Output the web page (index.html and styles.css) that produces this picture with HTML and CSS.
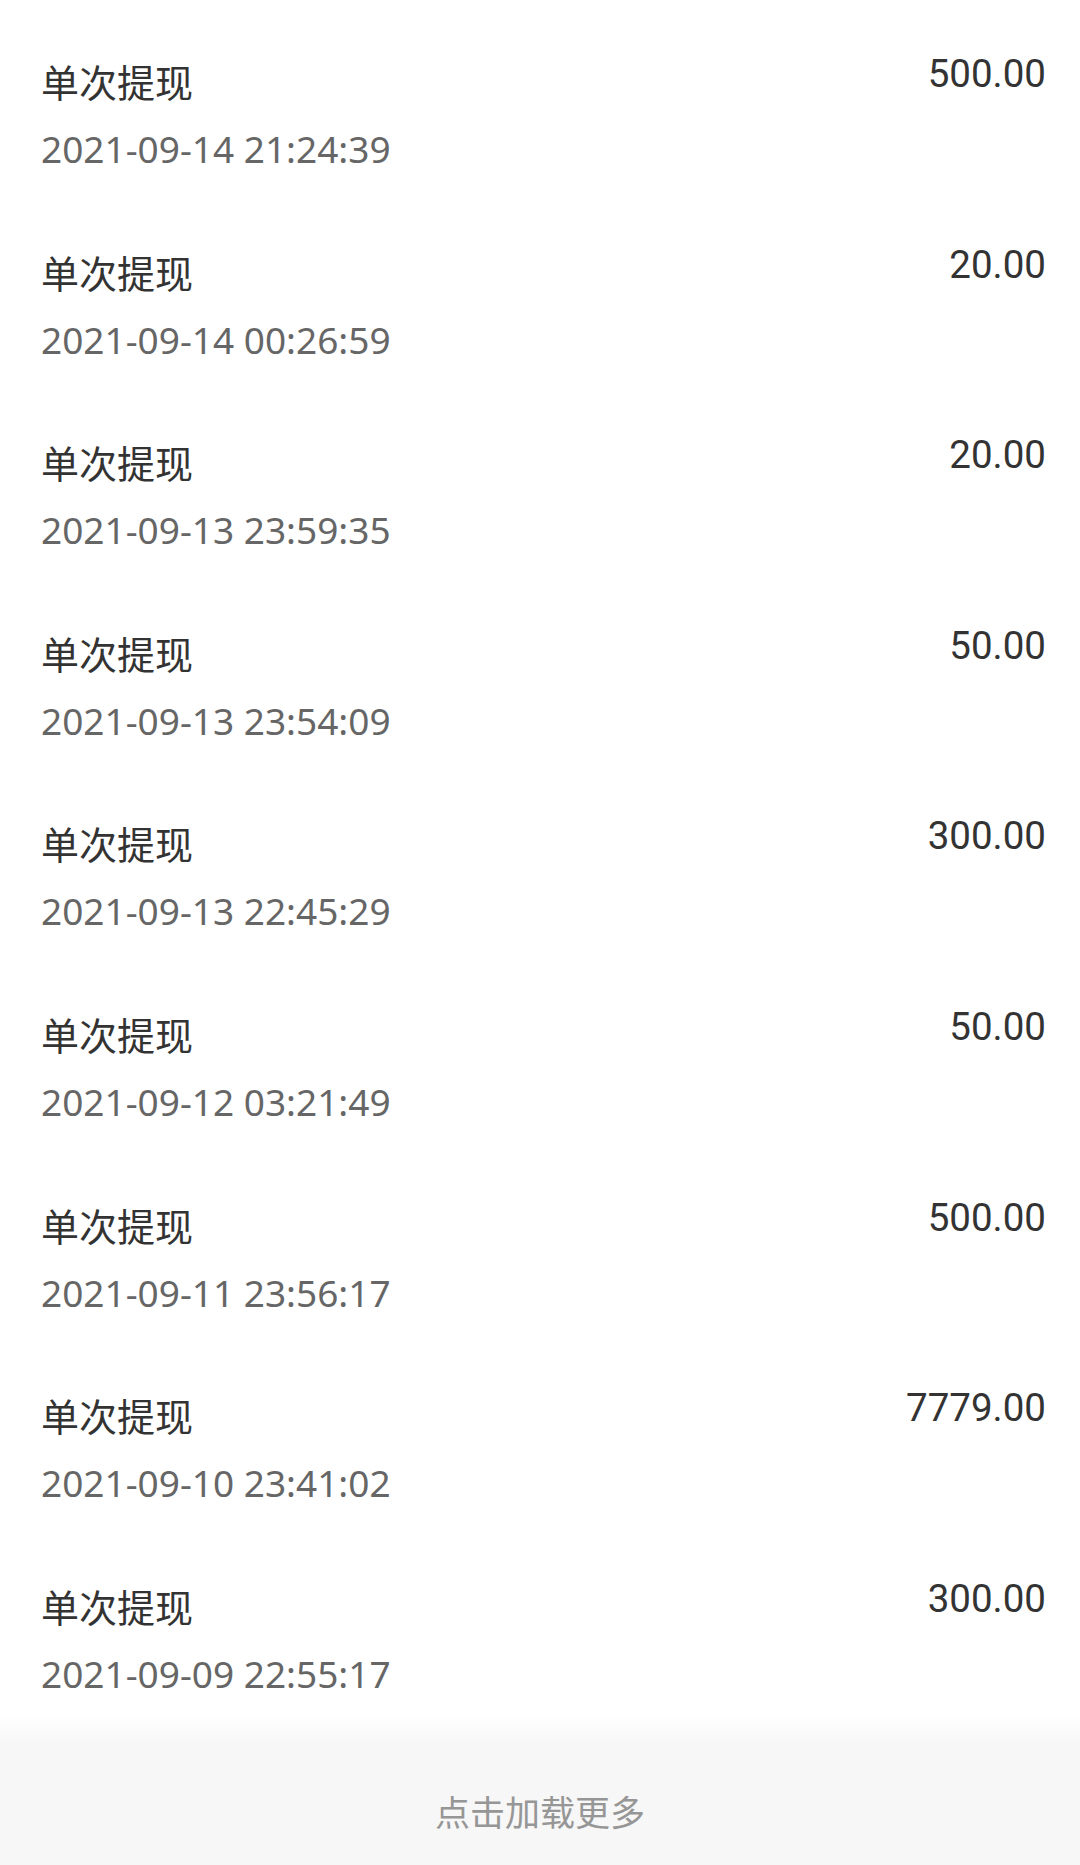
FILE: index.html
```html
<!DOCTYPE html>
<html lang="zh-CN">

<head>
	<meta charset="UTF-8" />
	<meta name="viewport" content="width=device-width, initial-scale=1.0" />
	<title>提现记录</title>
	<link rel="stylesheet" href="styles.css">
</head>

<body>
	<div class="list">
		<div class="row">
			<div class="info">
				<div class="name">单次提现</div>
				<div class="time">2021-09-14 21:24:39</div>
			</div>
			<div class="amount">500.00</div>
		</div>
		<div class="row">
			<div class="info">
				<div class="name">单次提现</div>
				<div class="time">2021-09-14 00:26:59</div>
			</div>
			<div class="amount">20.00</div>
		</div>
		<div class="row">
			<div class="info">
				<div class="name">单次提现</div>
				<div class="time">2021-09-13 23:59:35</div>
			</div>
			<div class="amount">20.00</div>
		</div>
		<div class="row">
			<div class="info">
				<div class="name">单次提现</div>
				<div class="time">2021-09-13 23:54:09</div>
			</div>
			<div class="amount">50.00</div>
		</div>
		<div class="row">
			<div class="info">
				<div class="name">单次提现</div>
				<div class="time">2021-09-13 22:45:29</div>
			</div>
			<div class="amount">300.00</div>
		</div>
		<div class="row">
			<div class="info">
				<div class="name">单次提现</div>
				<div class="time">2021-09-12 03:21:49</div>
			</div>
			<div class="amount">50.00</div>
		</div>
		<div class="row">
			<div class="info">
				<div class="name">单次提现</div>
				<div class="time">2021-09-11 23:56:17</div>
			</div>
			<div class="amount">500.00</div>
		</div>
		<div class="row">
			<div class="info">
				<div class="name">单次提现</div>
				<div class="time">2021-09-10 23:41:02</div>
			</div>
			<div class="amount">7779.00</div>
		</div>
		<div class="row">
			<div class="info">
				<div class="name">单次提现</div>
				<div class="time">2021-09-09 22:55:17</div>
			</div>
			<div class="amount">300.00</div>
		</div>
	</div>

	<!-- load more -->
	<div class="more">点击加载更多</div>
</body>

</html>
```

FILE: styles.css
```css
body {
	margin: 0;
	background: #ffffff;
	font-family: Roboto, "Noto Sans CJK SC", sans-serif;
}

.list {
	padding: 0 34px 0 41px;
}

.row {
	display: flex;
	justify-content: space-between;
	align-items: flex-start;
	box-sizing: border-box;
	height: 190.6px;
	padding-top: 55px;
}

.info {
	display: flex;
	flex-direction: column;
}

.name {
	margin-top: 7px;
	font-family: "Noto Sans CJK SC", sans-serif;
	font-size: 38px;
	line-height: 38px;
	color: #333333;
}

.time {
	margin-top: 30px;
	font-family: "Noto Sans", sans-serif;
	font-size: 37px;
	line-height: 37px;
	color: #666666;
}

.amount {
	font-size: 38.5px;
	line-height: 38px;
	color: #333333;
}

.more {
	box-sizing: border-box;
	height: 150px;
	padding-top: 78px;
	text-align: center;
	font-family: "Noto Sans CJK SC", sans-serif;
	font-size: 35px;
	line-height: 35px;
	color: #969696;
	background: linear-gradient(#ffffff 0, #f7f7f7 28px);
}
```
